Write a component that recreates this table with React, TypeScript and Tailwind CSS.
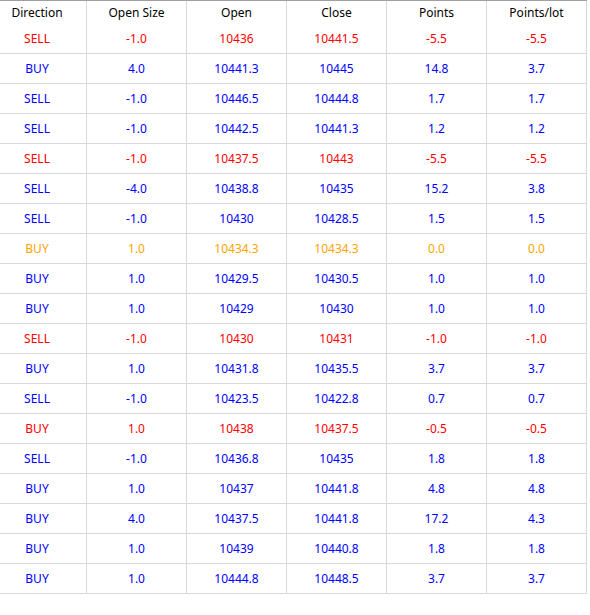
import React from "react";

type Trade = {
  dir: string;
  size: string;
  open: string;
  close: string;
  points: string;
  perLot: string;
  tone: "red" | "blue" | "orange";
};

const trades: Trade[] = [
  { dir: "SELL", size: "-1.0", open: "10436", close: "10441.5", points: "-5.5", perLot: "-5.5", tone: "red" },
  { dir: "BUY", size: "4.0", open: "10441.3", close: "10445", points: "14.8", perLot: "3.7", tone: "blue" },
  { dir: "SELL", size: "-1.0", open: "10446.5", close: "10444.8", points: "1.7", perLot: "1.7", tone: "blue" },
  { dir: "SELL", size: "-1.0", open: "10442.5", close: "10441.3", points: "1.2", perLot: "1.2", tone: "blue" },
  { dir: "SELL", size: "-1.0", open: "10437.5", close: "10443", points: "-5.5", perLot: "-5.5", tone: "red" },
  { dir: "SELL", size: "-4.0", open: "10438.8", close: "10435", points: "15.2", perLot: "3.8", tone: "blue" },
  { dir: "SELL", size: "-1.0", open: "10430", close: "10428.5", points: "1.5", perLot: "1.5", tone: "blue" },
  { dir: "BUY", size: "1.0", open: "10434.3", close: "10434.3", points: "0.0", perLot: "0.0", tone: "orange" },
  { dir: "BUY", size: "1.0", open: "10429.5", close: "10430.5", points: "1.0", perLot: "1.0", tone: "blue" },
  { dir: "BUY", size: "1.0", open: "10429", close: "10430", points: "1.0", perLot: "1.0", tone: "blue" },
  { dir: "SELL", size: "-1.0", open: "10430", close: "10431", points: "-1.0", perLot: "-1.0", tone: "red" },
  { dir: "BUY", size: "1.0", open: "10431.8", close: "10435.5", points: "3.7", perLot: "3.7", tone: "blue" },
  { dir: "SELL", size: "-1.0", open: "10423.5", close: "10422.8", points: "0.7", perLot: "0.7", tone: "blue" },
  { dir: "BUY", size: "1.0", open: "10438", close: "10437.5", points: "-0.5", perLot: "-0.5", tone: "red" },
  { dir: "SELL", size: "-1.0", open: "10436.8", close: "10435", points: "1.8", perLot: "1.8", tone: "blue" },
  { dir: "BUY", size: "1.0", open: "10437", close: "10441.8", points: "4.8", perLot: "4.8", tone: "blue" },
  { dir: "BUY", size: "4.0", open: "10437.5", close: "10441.8", points: "17.2", perLot: "4.3", tone: "blue" },
  { dir: "BUY", size: "1.0", open: "10439", close: "10440.8", points: "1.8", perLot: "1.8", tone: "blue" },
  { dir: "BUY", size: "1.0", open: "10444.8", close: "10448.5", points: "3.7", perLot: "3.7", tone: "blue" },
];

const toneClass = {
  red: "text-[#ff0000]",
  blue: "text-[#0000ff]",
  orange: "text-[#ffa500]",
};

const headers = ["Open Size", "Open", "Close", "Points", "Points/lot"];

const App = () => {
  return (
    <div
      className="w-[590px] h-[615px] bg-white text-[12px] overflow-hidden"
      style={{ fontFamily: '"Noto Sans", "Open Sans", sans-serif' }}
    >
      <div className="w-[587px] border-t border-[#a0a0a0]">
        {/* header */}
        <div className="flex h-[23px] text-black">
          <div className="w-[87px] pr-[12px] border-r border-[#d9d9d9] flex items-center justify-center">
            Direction
          </div>
          {headers.map((h) => (
            <div
              key={h}
              className="w-[100px] border-r border-[#d9d9d9] flex items-center justify-center"
            >
              {h}
            </div>
          ))}
        </div>

        {/* rows */}
        {trades.map((t, i) => (
          <div
            key={i}
            className={`flex h-[30px] border-b border-[#d9d9d9] ${toneClass[t.tone]}`}
          >
            <div className="w-[87px] pr-[12px] border-r border-[#d9d9d9] flex items-center justify-center">
              {t.dir}
            </div>
            {[t.size, t.open, t.close, t.points, t.perLot].map((v, j) => (
              <div
                key={j}
                className="w-[100px] border-r border-[#d9d9d9] flex items-center justify-center"
              >
                {v}
              </div>
            ))}
          </div>
        ))}
      </div>
    </div>
  );
};

export default App;
